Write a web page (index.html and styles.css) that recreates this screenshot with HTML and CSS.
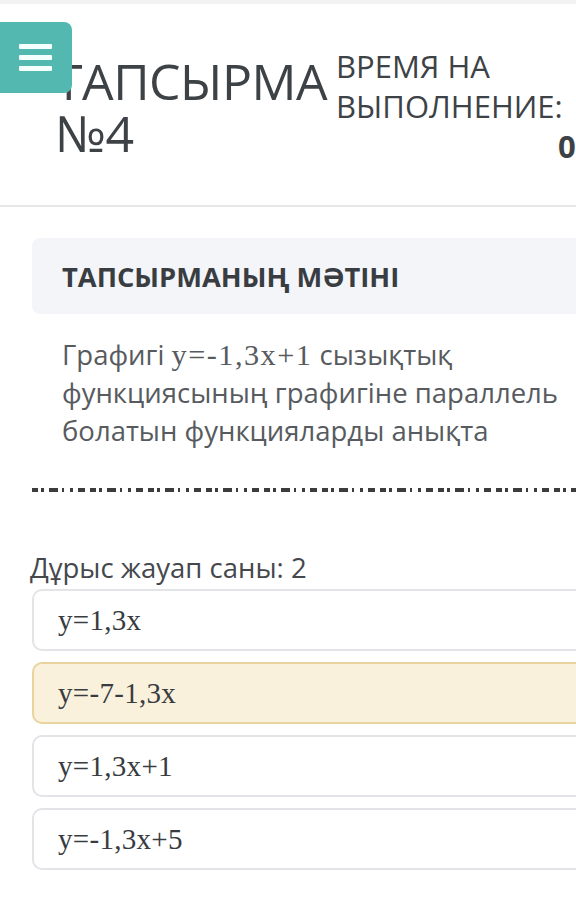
FILE: index.html
```html
<!DOCTYPE html>
<html lang="kk">
<head>
  <meta charset="UTF-8" />
  <meta name="viewport" content="width=device-width, initial-scale=1.0" />
  <title>Тапсырма №4</title>
  <link rel="stylesheet" href="styles.css">
</head>
<body>
  <div class="top-strip"></div>

  <button class="menu-btn" aria-label="Меню">
    <span></span><span></span><span></span>
  </button>

  <div class="page">
    <header class="task-header">
      <h1 class="task-title">ТАПСЫРМА №4</h1>
      <div class="timer">
        <div class="timer-label">ВРЕМЯ НА ВЫПОЛНЕНИЕ:</div>
        <div class="timer-value">00:00</div>
      </div>
    </header>

    <main class="task">
      <div class="task-head">ТАПСЫРМАНЫҢ МӘТІНІ</div>
      <p class="task-text">Графигі <span class="math">y=-1,3x+1</span> сызықтық функциясының графигіне параллель болатын функцияларды анықта</p>

      <div class="divider"></div>

      <div class="answers-count">Дұрыс жауап саны: 2</div>

      <ul class="options">
        <li class="option"><span class="math">y=1,3x</span></li>
        <li class="option selected"><span class="math">y=-7-1,3x</span></li>
        <li class="option"><span class="math">y=1,3x+1</span></li>
        <li class="option"><span class="math">y=-1,3x+5</span></li>
      </ul>
    </main>
  </div>
</body>
</html>
```

FILE: styles.css
```css
:root {
  --text-color: #3d4246;
  --muted-color: #575b60;
  --teal: #52b8b0;
  --border-color: #e2e4e7;
  --font-main: 'Open Sans', 'Noto Sans', sans-serif;
  --font-math: 'Liberation Serif', 'DejaVu Serif', serif;
}

* {
  margin: 0;
  padding: 0;
  box-sizing: border-box;
}

body {
  font-family: var(--font-main);
  color: var(--text-color);
  background: #fff;
  overflow: hidden;
}

.top-strip {
  height: 4px;
  background: #f2f2f2;
}

.menu-btn {
  position: absolute;
  top: 22px;
  left: 0;
  width: 72px;
  height: 71px;
  background: var(--teal);
  border: none;
  border-radius: 0 8px 8px 0;
  display: flex;
  flex-direction: column;
  align-items: center;
  justify-content: center;
  gap: 6px;
  padding-right: 2px;
  z-index: 10;
}

.menu-btn span {
  display: block;
  width: 33px;
  height: 5px;
  background: #f4fffe;
  border-radius: 1px;
}

.page {
  width: 680px;
}

.task-header {
  display: flex;
  align-items: flex-start;
  padding: 42px 0 39px 55px;
  border-bottom: 2px solid #e6e7e8;
}

.task-title {
  font-size: 50px;
  font-weight: 400;
  line-height: 52px;
  width: 282px;
  margin-top: 9px;
  letter-spacing: -0.5px;
}

.timer {
  font-size: 31px;
  line-height: 40px;
  margin-left: -1px;
}

.timer-label {
  width: 240px;
}

.timer-value {
  font-weight: 700;
  padding-left: 222px;
}

.task {
  padding-left: 32px;
}

.task-head {
  margin-top: 31px;
  height: 76px;
  display: flex;
  align-items: center;
  padding: 0 30px;
  background: #f3f5f8;
  border-radius: 8px;
  font-size: 27.3px;
  font-weight: 700;
  color: #393d42;
}

.task-text {
  margin-top: 22px;
  padding-left: 30px;
  width: 560px;
  font-size: 27.5px;
  line-height: 38px;
  color: var(--muted-color);
}

.math {
  font-family: var(--font-math);
}

.task-text .math {
  font-size: 1.1em;
  line-height: 1;
  letter-spacing: 1.5px;
}

.divider {
  margin-top: 38px;
  height: 4px;
  background: repeating-linear-gradient(to right,
    #3c3c3c 0 6px, transparent 6px 9px,
    #3c3c3c 9px 12px, transparent 12px 17px,
    #3c3c3c 17px 26px, transparent 26px 30px,
    #3c3c3c 30px 32px, transparent 32px 38px,
    #3c3c3c 38px 41px, transparent 41px 46px,
    #3c3c3c 46px 53px, transparent 53px 58px);
}

.answers-count {
  margin-top: 58px;
  margin-left: -2px;
  font-size: 27.5px;
  line-height: 36px;
  color: #44484c;
}

.options {
  list-style: none;
  margin-top: 3px;
  display: flex;
  flex-direction: column;
  gap: 11px;
}

.option {
  height: 62px;
  display: flex;
  align-items: center;
  padding-left: 24px;
  border: 2px solid var(--border-color);
  border-radius: 10px;
  color: #383c40;
}

.option .math {
  font-size: 29px;
  letter-spacing: 0.3px;
}

.option.selected {
  background: #faf1dc;
  border-color: #ead49e;
}
```
